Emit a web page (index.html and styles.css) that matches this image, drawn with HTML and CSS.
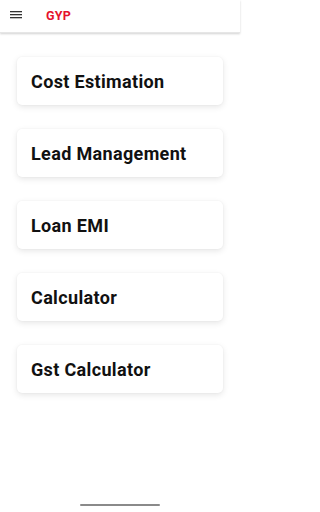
FILE: index.html
```html
<!DOCTYPE html>
<html>
<head>
<meta charset="utf-8">
<link rel="stylesheet" href="styles.css">
</head>
<body>
<div class="app">
  <header class="topbar">
    <svg class="menu" width="12" height="8" viewBox="0 0 12 8"><rect x="0" y="0" width="12" height="1.3" fill="#333"/><rect x="0" y="3" width="12" height="1.3" fill="#333"/><rect x="0" y="6" width="12" height="1.3" fill="#333"/></svg>
    <span class="brand">GYP</span>
  </header>
  <main class="list">
    <div class="card">Cost Estimation</div>
    <div class="card">Lead Management</div>
    <div class="card">Loan EMI</div>
    <div class="card">Calculator</div>
    <div class="card">Gst Calculator</div>
  </main>
  <div class="navbar"><div class="handle"></div></div>
</div>
</body>
</html>
```
FILE: styles.css
```css
html, body {
  margin: 0;
  padding: 0;
  background: #fff;
}
body {
  font-family: Roboto, "Liberation Sans", sans-serif;
  height: 512px;
  overflow: hidden;
}
.app {
  display: flex;
  flex-direction: column;
  width: 240px;
  height: 512px;
}
.topbar {
  height: 33px;
  display: flex;
  align-items: center;
  padding-left: 10px;
  box-shadow: 0 1px 2px rgba(0,0,0,0.18);
  border-bottom: 1px solid #e6e6e6;
  box-sizing: border-box;
  padding-bottom: 2px;
}
.menu {
  display: block;
}
.brand {
  margin-left: 24px;
  color: #e5122d;
  font-weight: 700;
  font-size: 12.5px;
  letter-spacing: 0.3px;
}
.list {
  flex: 1;
  display: flex;
  flex-direction: column;
  gap: 24px;
  padding: 24px 17px 0 17px;
}
.card {
  height: 48px;
  display: flex;
  align-items: center;
  padding-left: 14px;
  background: #fff;
  border-radius: 5px;
  box-shadow: 0 2px 6px rgba(0,0,0,0.10), 0 0 2px rgba(0,0,0,0.05);
  font-weight: 700;
  font-size: 18px;
  letter-spacing: 0.35px;
  color: #111;
}
.navbar {
  height: 14px;
  display: flex;
  justify-content: center;
  align-items: center;
}
.handle {
  width: 80px;
  height: 2px;
  background: #8a8a8a;
  border-radius: 1px;
}
```
